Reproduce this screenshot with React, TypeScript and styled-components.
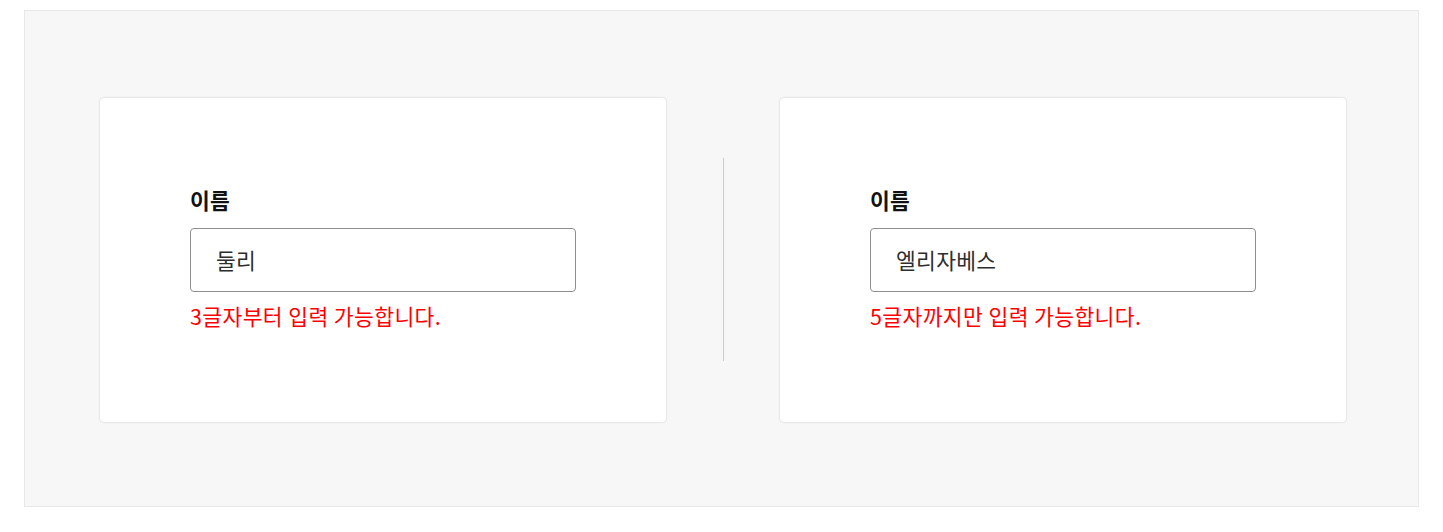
import React from "react";
import styled, { createGlobalStyle } from "styled-components";

const Global = createGlobalStyle`
  html, body { margin: 0; padding: 0; background: #ffffff; }
  body { font-family: "Noto Sans CJK KR", "Noto Sans", sans-serif; }
`;

const Frame = styled.div`
  margin: 10px 24px 0 24px;
  height: 497px;
  box-sizing: border-box;
  border: 1px solid #e8e8e8;
  background: #f7f7f7;
  display: flex;
  align-items: center;
  padding-left: 75px;
  padding-top: 2px;
`;

const Card = styled.div`
  width: 566px;
  height: 324px;
  box-sizing: border-box;
  background: #ffffff;
  border-radius: 4px;
  box-shadow: 0 0 2px rgba(0, 0, 0, 0.22);
  padding: 88px 90px 0 90px;
  display: flex;
  flex-direction: column;
`;

const Divider = styled.div`
  width: 1px;
  height: 203px;
  background: #cccccc;
  margin: 0 56px 0 57px;
`;

const Label = styled.label`
  font-size: 21.5px;
  font-weight: 700;
  line-height: 28px;
  letter-spacing: 0.3px;
  color: #111111;
`;

const Input = styled.input`
  margin-top: 14px;
  width: 386px;
  height: 64px;
  box-sizing: border-box;
  border: 1.5px solid #8f8f8f;
  border-radius: 4px;
  padding: 0 25px;
  font-family: inherit;
  font-size: 21.5px;
  letter-spacing: 0.3px;
  color: #2e2e2e;
  outline: none;
  background: #ffffff;
`;

const ErrorText = styled.p`
  margin: 10px 0 0 0;
  font-size: 21.5px;
  line-height: 28px;
  letter-spacing: 0.4px;
  color: #ff0000;
`;

function Field({ value, error }: { value: string; error: string }) {
  return (
    <Card>
      <Label>이름</Label>
      <Input value={value} readOnly />
      <ErrorText>{error}</ErrorText>
    </Card>
  );
}

export default function App() {
  return (
    <>
      <Global />
      <Frame>
        <Field value="둘리" error="3글자부터 입력 가능합니다." />
        <Divider />
        <Field value="엘리자베스" error="5글자까지만 입력 가능합니다." />
      </Frame>
    </>
  );
}
